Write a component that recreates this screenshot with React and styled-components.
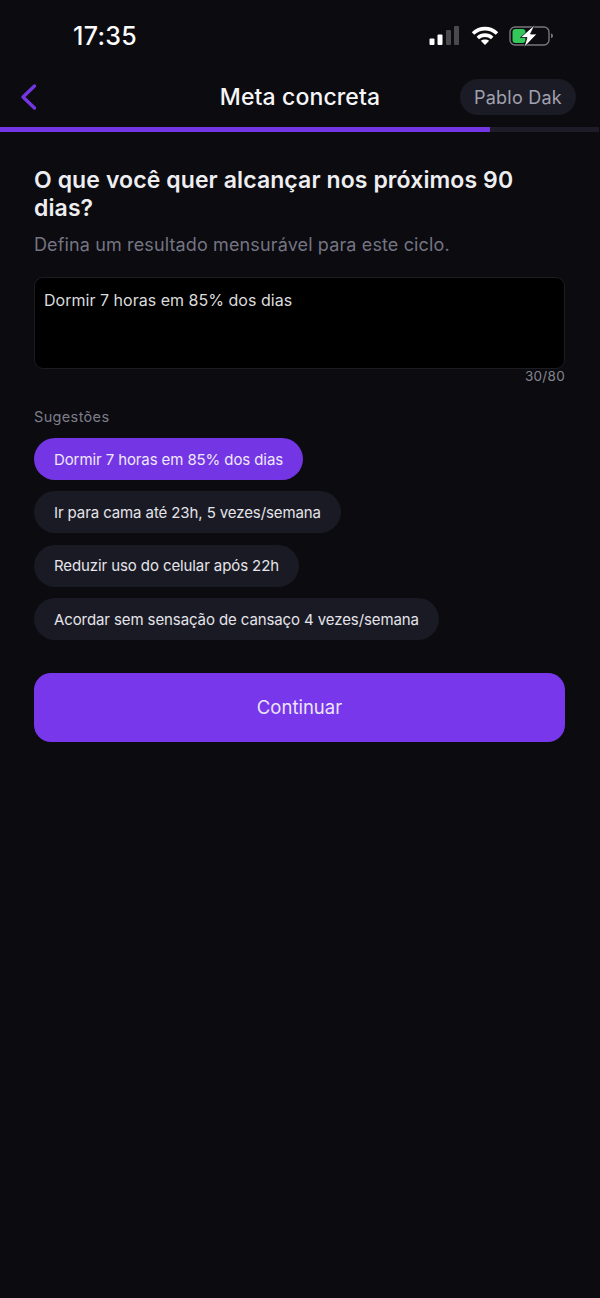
import React from 'react';
import styled, { createGlobalStyle } from 'styled-components';

const Global = createGlobalStyle`
  html, body { margin: 0; padding: 0; background: #0b0b10; }
  * { box-sizing: border-box; }
`;
const Page = styled.div`
  width: 600px; height: 1298px; background: #0b0b10; overflow: hidden;
  font-family: Inter, "Noto Sans", sans-serif; color: #fff;
`;
const StatusBar = styled.div`
  height: 72px; display: flex; align-items: center; justify-content: space-between;
  padding: 0 45px 0 73px;
`;
const Time = styled.div`
  font-size: 25px; font-weight: 500; letter-spacing: 0.3px; color: #fbfbfb; line-height: 30px;
`;
const StatusIcons = styled.div`
  display: flex; align-items: center; gap: 10px;
`;
const Header = styled.div`
  height: 55px; display: grid; grid-template-columns: 1fr auto 1fr; align-items: center;
  padding: 0 24px 5px;
`;
const BackButton = styled.div`
  display: flex; align-items: center; height: 32px; margin-left: -8px;
`;
const Title = styled.div`
  font-size: 23px; font-weight: 500; color: #f6f6f8; letter-spacing: 0.12px;
`;
const UserPill = styled.div`
  justify-self: end; height: 36px; padding: 0 14px; border-radius: 18px;
  display: flex; align-items: center; background: #1b1b25;
  font-size: 18px; font-weight: 400; color: #a0a0ae; letter-spacing: 0.25px;
`;
const ProgressTrack = styled.div`
  height: 5px; margin-right: 1px; background: #1d1c28;
`;
const ProgressFill = styled.div`
  height: 100%; background: #7436e4;
`;
const Content = styled.div`
  padding: 34px 35px 0 34px;
`;
const Heading = styled.h1`
  margin: 0; font-size: 23px; line-height: 28px; font-weight: 600; color: #eeeef1; letter-spacing: 0.1px;
`;
const Subtitle = styled.p`
  margin: 11px 0 0; font-size: 18px; line-height: 24px; color: #747482; letter-spacing: 0.13px;
`;
const TextBox = styled.div`
  margin-top: 20px; height: 92px; background: #000; border: 1px solid #1c1c22; border-radius: 9px;
  padding: 11px 9px; font-size: 16px; line-height: 22px; color: #dcdcdc; letter-spacing: 0.02px;
`;
const Counter = styled.div`
  text-align: right; font-size: 13.500px; line-height: 16px; color: #85858f; margin-top: -1px; letter-spacing: 0.3px;
`;
const SectionLabel = styled.div`
  margin-top: 24px; font-size: 14.500px; line-height: 18px; color: #7e7e8a; letter-spacing: 0.35px;
`;
const Chips = styled.div`
  margin-top: 12px; display: flex; flex-direction: column; align-items: flex-start; gap: 11.400px;
`;
const Chip = styled.div`
  height: 42px; padding: 0 20px; border-radius: 21px; display: flex; align-items: center;
  font-size: 15px; letter-spacing: -0.1px;
  background: ${p => (p.$active ? '#7436e4' : '#1a1a24')};
  color: ${p => (p.$active ? '#efe8fc' : '#e4e4ea')};
`;
const ContinueButton = styled.div`
  margin-top: 33px; height: 69px; padding-bottom: 1px; border-radius: 17px; background: #7837ea;
  display: flex; align-items: center; justify-content: center;
  font-size: 18.500px; font-weight: 400; color: #ece4fb;
`;

const Signal = () => (
  <svg width="32" height="20" viewBox="0 0 32 20">
    <rect x="0.500" y="12.500" width="5" height="6.500" rx="1" fill="#fff" />
    <rect x="8.500" y="8.500" width="5" height="10.500" rx="1" fill="#fff" />
    <rect x="17" y="4" width="5" height="15" rx="1" fill="#4a4a4e" />
    <rect x="25" y="0" width="5" height="19" rx="1" fill="#4a4a4e" />
  </svg>
);
const Wifi = () => (
  <svg width="28" height="20" viewBox="0 0 28 20" fill="none" stroke="#fff" strokeWidth="3.600">
    <path d="M2 7.500C9 1 19 1 26 7.500" />
    <path d="M6.800 12C11 8.200 17 8.200 21.200 12" />
    <path d="M14 19l-4.200-4.200c2.400-1.900 6-1.900 8.400 0z" fill="#fff" stroke="none" />
  </svg>
);
const Battery = () => (
  <svg width="46" height="24" viewBox="0 0 46 24">
    <rect x="1" y="3" width="39" height="18" rx="5" fill="none" stroke="#77777b" strokeWidth="1.400" />
    <path d="M42 9.500c1.500.4 2 1.200 2 2.300s-.5 1.900-2 2.300z" fill="#77777b" />
    <rect x="3.500" y="5" width="13" height="14" rx="3" fill="#34c759" />
    <path d="M26 0.500L11.500 13.500h6.500L15 23.500 28 10h-6.500z" fill="#fff" stroke="#0b0b10" strokeWidth="0.800" />
  </svg>
);
const BackIcon = () => (
  <svg width="24" height="32" viewBox="0 0 24 32" fill="none" stroke="#7436e4" strokeWidth="3.400" strokeLinecap="round" strokeLinejoin="round">
    <path d="M18.500 5L7 16l11.500 11" />
  </svg>
);

const chips = [
  'Dormir 7 horas em 85% dos dias',
  'Ir para cama até 23h, 5 vezes/semana',
  'Reduzir uso do celular após 22h',
  'Acordar sem sensação de cansaço 4 vezes/semana',
];

export default function App() {
  return (
    <Page>
      <Global />
      <StatusBar>
        <Time>17:35</Time>
        <StatusIcons><Signal /><Wifi /><Battery /></StatusIcons>
      </StatusBar>
      <Header>
        <BackButton><BackIcon /></BackButton>
        <Title>Meta concreta</Title>
        <UserPill>Pablo Dak</UserPill>
      </Header>
      <ProgressTrack><ProgressFill style={{ width: `${(490 / 599) * 100}%` }} /></ProgressTrack>
      <Content>
        <Heading>O que você quer alcançar nos próximos 90 dias?</Heading>
        <Subtitle>Defina um resultado mensurável para este ciclo.</Subtitle>
        <TextBox>Dormir 7 horas em 85% dos dias</TextBox>
        <Counter>30/80</Counter>
        <SectionLabel>Sugestões</SectionLabel>
        <Chips>
          {chips.map((c, i) => <Chip key={c} $active={i === 0}>{c}</Chip>)}
        </Chips>
        <ContinueButton>Continuar</ContinueButton>
      </Content>
    </Page>
  );
}
